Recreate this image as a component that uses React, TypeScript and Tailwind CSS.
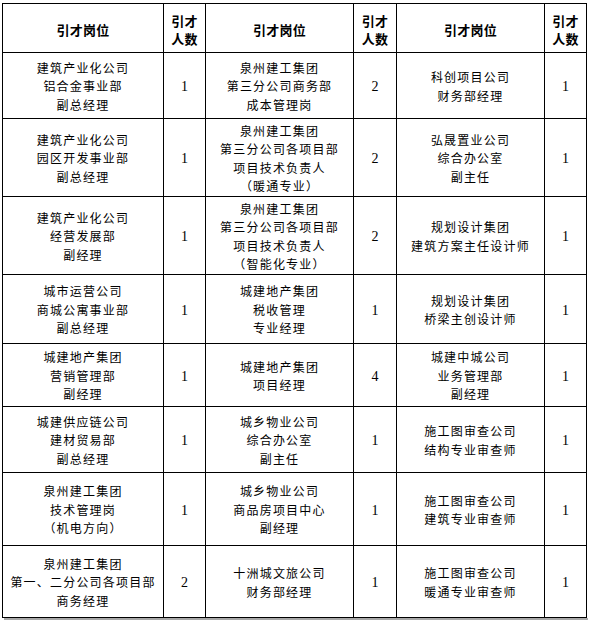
import React from "react";

type Row = { h: string; a: string[]; an: string; b: string[]; bn: string; c: string[]; cn: string };

const rows: Row[] = [
  { h: "h-[66px]", a: ["建筑产业化公司", "铝合金事业部", "副总经理"], an: "1", b: ["泉州建工集团", "第三分公司商务部", "成本管理岗"], bn: "2", c: ["科创项目公司", "财务部经理"], cn: "1" },
  { h: "h-[78px]", a: ["建筑产业化公司", "园区开发事业部", "副总经理"], an: "1", b: ["泉州建工集团", "第三分公司各项目部", "项目技术负责人", "（暖通专业）"], bn: "2", c: ["弘晟置业公司", "综合办公室", "副主任"], cn: "1" },
  { h: "h-[78px]", a: ["建筑产业化公司", "经营发展部", "副经理"], an: "1", b: ["泉州建工集团", "第三分公司各项目部", "项目技术负责人", "（智能化专业）"], bn: "2", c: ["规划设计集团", "建筑方案主任设计师"], cn: "1" },
  { h: "h-[69px]", a: ["城市运营公司", "商城公寓事业部", "副总经理"], an: "1", b: ["城建地产集团", "税收管理", "专业经理"], bn: "1", c: ["规划设计集团", "桥梁主创设计师"], cn: "1" },
  { h: "h-[63px]", a: ["城建地产集团", "营销管理部", "副经理"], an: "1", b: ["城建地产集团", "项目经理"], bn: "4", c: ["城建中城公司", "业务管理部", "副经理"], cn: "1" },
  { h: "h-[66px]", a: ["城建供应链公司", "建材贸易部", "副总经理"], an: "1", b: ["城乡物业公司", "综合办公室", "副主任"], bn: "1", c: ["施工图审查公司", "结构专业审查师"], cn: "1" },
  { h: "h-[73px]", a: ["泉州建工集团", "技术管理岗", "（机电方向）"], an: "1", b: ["城乡物业公司", "商品房项目中心", "副经理"], bn: "1", c: ["施工图审查公司", "建筑专业审查师"], cn: "1" },
  { h: "h-[72px]", a: ["泉州建工集团", "第一、二分公司各项目部", "商务经理"], an: "2", b: ["十洲城文旅公司", "财务部经理"], bn: "1", c: ["施工图审查公司", "暖通专业审查师"], cn: "1" },
];

const cell = "border-r border-b border-black flex flex-col items-center justify-center text-center";
const grid = "grid grid-cols-[161px_42px_148px_43px_148px_42px]";

function TextCell({ lines }: { lines: string[] }) {
  return (
    <div className={cell + " text-[12px] leading-[18.5px] tracking-[1.2px] pt-[2px]"}>
      {lines.map((l, i) => (
        <div key={i} className="whitespace-nowrap">{l}</div>
      ))}
    </div>
  );
}

function NumCell({ n }: { n: string }) {
  return (
    <div className={cell + " text-[14px] pt-[2px] [font-family:'Liberation_Serif',serif]"}>{n}</div>
  );
}

function HeadPos() {
  return <div className={cell + " text-[13px] font-bold tracking-[0.3px] pt-[4px]"}>引才岗位</div>;
}
function HeadNum() {
  return (
    <div className={cell + " text-[13px] font-bold leading-[18px] tracking-[0.3px] pt-[4px]"}>
      <div>引才</div>
      <div>人数</div>
    </div>
  );
}

export default function App() {
  return (
    <div className="w-[590px] h-[620px] bg-white text-black overflow-hidden [font-family:'Noto_Sans_CJK_SC','Noto_Sans',sans-serif]">
      <div className="ml-[2px] mt-[3px] w-[585px] border-l border-t border-black">
        <div className={grid + " h-[49px]"}>
          <HeadPos />
          <HeadNum />
          <HeadPos />
          <HeadNum />
          <HeadPos />
          <HeadNum />
        </div>
        {rows.map((r, i) => (
          <div key={i} className={grid + " " + r.h}>
            <TextCell lines={r.a} />
            <NumCell n={r.an} />
            <TextCell lines={r.b} />
            <NumCell n={r.bn} />
            <TextCell lines={r.c} />
            <NumCell n={r.cn} />
          </div>
        ))}
      </div>
      <div className="ml-[4px] w-[584px] h-[2px] bg-[#a8a8a8]" />
    </div>
  );
}
